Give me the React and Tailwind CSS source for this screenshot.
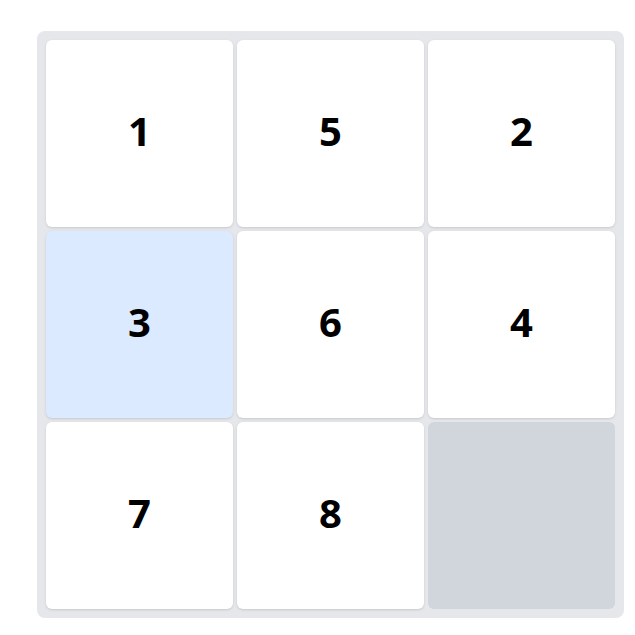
export default function App() {
  const tiles = [1, 5, 2, 3, 6, 4, 7, 8, 0];
  return (
    <div className="min-h-screen bg-white pl-[37px] pt-[31px]" style={{ fontFamily: '"Open Sans", "Noto Sans", sans-serif' }}>
      <div className="grid w-[587px] grid-cols-3 gap-1 rounded-lg bg-gray-200 p-[9px]">
        {tiles.map((n) =>
          n === 0 ? (
            <div key={n} className="h-[187px] rounded-md bg-gray-300" />
          ) : (
            <div
              key={n}
              className={`flex h-[187px] items-center justify-center rounded-md pb-[6px] text-[40px] font-bold text-black shadow ${
                n === 3 ? "bg-blue-100" : "bg-white"
              }`}
            >
              {n}
            </div>
          )
        )}
      </div>
    </div>
  );
}
